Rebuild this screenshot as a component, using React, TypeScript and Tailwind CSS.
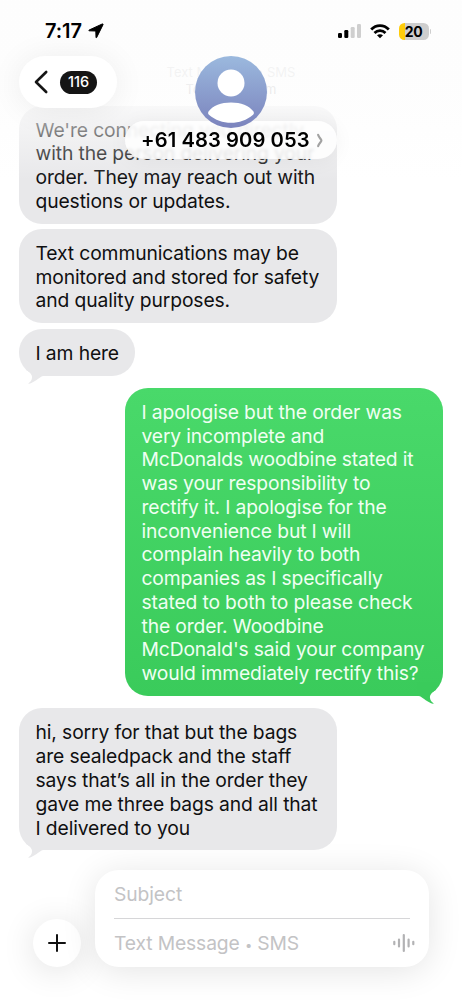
import React from "react";

type MessageType = {
  id: number;
  from: "them" | "me";
  lines: string[];
  tail?: boolean;
  className: string;
};

const MESSAGES: MessageType[] = [
  {
    id: 1,
    from: "them",
    lines: [
      "We're connecting you directly",
      "with the person delivering your",
      "order. They may reach out with",
      "questions or updates.",
    ],
    className: "w-[318px]",
  },
  {
    id: 2,
    from: "them",
    lines: [
      "Text communications may be",
      "monitored and stored for safety",
      "and quality purposes.",
    ],
    className: "mt-[5px] w-[318px]",
  },
  {
    id: 3,
    from: "them",
    lines: ["I am here"],
    tail: true,
    className: "mt-[6px] w-[116px]",
  },
  {
    id: 4,
    from: "me",
    lines: [
      "I apologise but the order was",
      "very incomplete and",
      "McDonalds woodbine stated it",
      "was your responsibility to",
      "rectify it. I apologise for the",
      "inconvenience but I will",
      "complain heavily to both",
      "companies as I specifically",
      "stated to both to please check",
      "the order. Woodbine",
      "McDonald's said your company",
      "would immediately rectify this?",
    ],
    tail: true,
    className: "mt-[12px] w-[318px]",
  },
  {
    id: 5,
    from: "them",
    lines: [
      "hi, sorry for that but the bags",
      "are sealedpack and the staff",
      "says that’s all in the order they",
      "gave me three bags and all that",
      "I delivered to you",
    ],
    tail: true,
    className: "mt-[12.5px] w-[318px]",
  },
];

const Bubble = ({ message }: { message: MessageType }) => {
  const mine = message.from === "me";
  return (
    <div
      className={`relative shrink-0 rounded-[23px] pt-[13.2px] pb-[9.8px] pl-[16.5px] text-[19.3px] leading-[23.77px] whitespace-nowrap ${
        mine
          ? "self-end bg-linear-to-b from-[#49d96a] to-[#3acb5b] tracking-[-0.15px] text-[#effff2]"
          : "self-start bg-[#e8e8ea] tracking-[-0.12px] text-[#101011]"
      } ${message.className}`}
    >
      {message.lines.map((line) => (
        <p key={line}>{line}</p>
      ))}
      {message.tail && (
        <svg
          viewBox="0 0 24 22"
          className={`absolute -bottom-2 h-[22px] w-6 ${
            mine ? "right-[3px] -scale-x-100 text-[#3acb5b]" : "left-[3px] text-[#e8e8ea]"
          }`}
          fill="currentColor"
        >
          <path d="M4 8C8 10 10.5 13 10 16C9.7 18.3 8 20.3 6.6 21.3C6.2 21.8 6.5 22 7.1 21.8C12 20.7 17 16 20 14.3L23 13.8V0H4Z" />
        </svg>
      )}
    </div>
  );
};

const StatusBar = () => (
  <div className="flex h-[56px] items-center justify-between pt-[6px] pr-[31px] pl-[45px]">
    <div className="flex items-center gap-[6px]">
      <span className="text-[20px] font-semibold tracking-[-0.1px]">7:17</span>
      <svg viewBox="0 0 16 16" className="h-4 w-4" fill="currentColor" stroke="currentColor" strokeLinejoin="round">
        <path d="M14.2 1 1.2 7C.6 7.4.7 7.8 1.3 7.8L7.8 8 8 14.2C8 15 8.4 15 8.7 14.4L15 1.7C15.3 1 14.9.7 14.2 1Z" />
      </svg>
    </div>
    <div className="flex items-center">
      <svg viewBox="0 0 24 16" className="h-4 w-6">
        <rect x="0" y="10" width="4" height="5" rx="1.2" />
        <rect x="6.3" y="7" width="4" height="8" rx="1.2" />
        <rect x="12.7" y="4" width="4" height="11" rx="1.2" fill="#cfcfcf" />
        <rect x="19" y="1" width="4" height="14" rx="1.2" fill="#cfcfcf" />
      </svg>
      <svg viewBox="0 0 20 15" className="ml-[8px] h-[15px] w-5" fill="none" stroke="currentColor" strokeWidth="2.8">
        <path d="M1.2 5.5C6.2.3 13.8.3 18.8 5.5" />
        <path d="M4.5 9C7.6 5.9 12.4 5.9 15.5 9" />
        <path d="M7 11.3C8.6 9.8 11.4 9.8 13 11.3L10 14.3Z" fill="currentColor" stroke="none" />
      </svg>
      <div className="ml-[8.5px] flex h-[17px] w-[30px] items-center justify-center rounded-[5.5px] bg-linear-to-r from-[#ffcc0a] from-20% to-[#cecece] to-20% text-[14px] font-bold tracking-[-0.3px]">
        20
      </div>
      <div className="ml-[1px] h-[5px] w-[1.5px] rounded-r-full bg-[#cecece]" />
    </div>
  </div>
);

const Header = () => (
  <header className="absolute inset-x-0 top-0 z-10 h-[200px] bg-linear-[180deg,rgba(253,253,253,0.97)_0%,rgba(253,253,253,0.91)_40%,rgba(253,253,253,0.76)_54%,rgba(253,253,253,0.5)_65%,rgba(253,253,253,0.25)_77%,rgba(255,255,255,0)_90%]">
    <StatusBar />
    <div className="flex items-start pl-[19px]">
      <button className="flex h-[52px] w-[98px] items-center rounded-full bg-white pl-[14px] shadow-[0_2px_32px_rgba(0,0,0,0.07)]">
        <svg viewBox="0 0 16 24" className="h-6 w-4" fill="none" stroke="#151515" strokeWidth="2.6" strokeLinecap="round" strokeLinejoin="round">
          <path d="M13.2 2 3 12 13.2 22" />
        </svg>
        <span className="ml-[11px] flex h-[23px] w-[37px] items-center justify-center rounded-full bg-[#151515] text-[14.5px] font-medium tracking-[-0.1px] text-white">
          116
        </span>
      </button>
      <div className="ml-[8px] flex w-[212px] flex-col items-center">
        <svg viewBox="0 0 72 72" className="relative z-10 h-[72px] w-[72px]">
          <defs>
            <linearGradient id="avatar" x1="0" y1="0" x2="0" y2="1">
              <stop offset="0" stopColor="#9bb9de" />
              <stop offset="1" stopColor="#7b83bd" />
            </linearGradient>
          </defs>
          <circle cx="36" cy="36" r="36" fill="url(#avatar)" />
          <circle cx="36" cy="27" r="13.5" fill="#fff" />
          <path d="M13.5 55.5C18 49.5 26 46.5 36 46.5S54 49.5 58.5 55.5C59.2 57 59 58 57.8 59C52 64 44 66.8 36 66.8S20 64 14.2 59C13 58 12.8 57 13.5 55.5Z" fill="#fff" />
        </svg>
        <div className="mt-[-7px] flex h-[38px] w-full items-center rounded-full bg-white/85 pl-[16px] shadow-[0_2px_20px_rgba(0,0,0,0.05)] backdrop-blur-[1.5px]">
          <span className="w-[169px] text-[20.2px] font-semibold tracking-[0.08px] whitespace-nowrap">
            +61 483 909 053
          </span>
          <svg viewBox="0 0 8 16" className="ml-[6px] h-[15px] w-[8px]" fill="none" stroke="#a2a2a2" strokeWidth="2.3" strokeLinecap="round">
            <path d="M2 2C3 5 5.5 6.7 5.5 8S3 11 2 14" />
          </svg>
        </div>
      </div>
    </div>
  </header>
);

const Composer = () => (
  <footer className="flex items-end gap-[14px] pr-[33px] pb-[33px] pl-[33px]">
    <button className="flex h-[48px] w-[48px] shrink-0 items-center justify-center rounded-full bg-white shadow-[0_4px_34px_rgba(0,0,0,0.12)]">
      <svg viewBox="0 0 18 18" className="h-[18px] w-[18px]" stroke="#111" strokeWidth="2" strokeLinecap="round">
        <path d="M9 1V17M1 9H17" />
      </svg>
    </button>
    <div className="flex h-[97px] flex-1 flex-col rounded-[24px] bg-white pr-[14px] pl-[19px] text-[19.3px] tracking-[-0.1px] text-[#c3c3c5] shadow-[0_4px_34px_rgba(0,0,0,0.11)]">
      <div className="mr-[5px] flex h-[49px] items-center border-b border-[#d6d6d8]">Subject</div>
      <div className="flex flex-1 items-center justify-between">
        <span className="tracking-[-0.14px]">
          Text Message <span className="text-[13px]">•</span> SMS
        </span>
        <svg viewBox="0 0 22 20" className="h-5 w-[22px]" stroke="#b2b2b4" strokeWidth="2.2" strokeLinecap="round">
          <path d="M1.3 8.8V11.2M6 6.5V13.5M10.8 2V18M15.6 6.5V13.5M20.3 8.8V11.2" />
        </svg>
      </div>
    </div>
  </footer>
);

const App = () => {
  return (
    <div className="relative flex h-[1000px] w-[462px] flex-col justify-between overflow-hidden bg-white font-[Inter,sans-serif] text-black">
      <Header />
      <main className="flex flex-col px-[19px] pt-[63.5px]">
        <div className="h-[42px] text-center text-[13px] leading-[17px] text-[#828286]">
          <p>Text Message • SMS</p>
          <p>Today 7:05 pm</p>
        </div>
        {MESSAGES.map((message) => (
          <Bubble key={message.id} message={message} />
        ))}
      </main>
      <Composer />
    </div>
  );
};

export default App;
